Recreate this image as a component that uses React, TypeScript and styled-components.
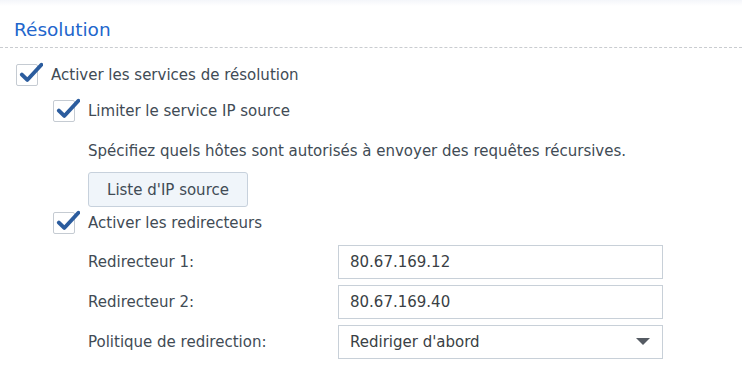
import React from 'react'
import styled, { createGlobalStyle } from 'styled-components'

const GlobalStyle = createGlobalStyle`
    html, body {
        margin: 0;
        padding: 0;
        background: #ffffff;
    }
    body {
        font-family: 'DejaVu Sans', Verdana, sans-serif;
        color: #414b55;
    }
`

type CheckProps = { checked?: boolean }

const CheckBox = ({ checked = true }: CheckProps) => (
    <BoxWrap>
        {checked && (
            <CheckMark viewBox="0 0 24 24">
                <path d="M4.5 12.5 L9.5 17.5 L22.5 3.5" />
            </CheckMark>
        )}
    </BoxWrap>
)

const App = () => {
    return (
        <>
            <GlobalStyle />
            <Page>
                <TopShade />
                <Header>
                    <Title>Résolution</Title>
                </Header>
                <Content>
                    <CheckRow level={0}>
                        <CheckBox />
                        <Label>Activer les services de résolution</Label>
                    </CheckRow>
                    <CheckRow level={1} spacing={8}>
                        <CheckBox />
                        <Label>Limiter le service IP source</Label>
                    </CheckRow>
                    <Description>Spécifiez quels hôtes sont autorisés à envoyer des requêtes récursives.</Description>
                    <Button>Liste d'IP source</Button>
                    <CheckRow level={1} spacing={2}>
                        <CheckBox />
                        <Label>Activer les redirecteurs</Label>
                    </CheckRow>
                    <Form>
                        <FieldRow>
                            <FieldLabel>Redirecteur 1:</FieldLabel>
                            <TextField>80.67.169.12</TextField>
                        </FieldRow>
                        <FieldRow>
                            <FieldLabel>Redirecteur 2:</FieldLabel>
                            <TextField>80.67.169.40</TextField>
                        </FieldRow>
                        <FieldRow>
                            <FieldLabel>Politique de redirection:</FieldLabel>
                            <TextField>
                                Rediriger d'abord
                                <Caret viewBox="0 0 14 8">
                                    <path d="M0 0 H14 L7 7 Z" />
                                </Caret>
                            </TextField>
                        </FieldRow>
                    </Form>
                </Content>
            </Page>
        </>
    )
}

const Page = styled.div`
    width: 742px;
    height: 389px;
    overflow: hidden;
    display: flex;
    flex-direction: column;
`
const TopShade = styled.div`
    height: 6px;
    background: linear-gradient(#f4f6fa, #ffffff);
`
const Header = styled.div`
    padding: 12px 0 5px 14px;
    border-bottom: 1px dashed #c9ccd0;
`
const Title = styled.h2`
    margin: 0;
    font-weight: normal;
    font-size: 18.5px;
    line-height: 24px;
    color: #2266cc;
`
const Content = styled.div`
    display: flex;
    flex-direction: column;
    align-items: flex-start;
    padding-top: 13px;
`
const CheckRow = styled.div<{ level: number; spacing?: number }>`
    display: flex;
    align-items: center;
    gap: 13px;
    height: 28px;
    margin-top: ${(p) => p.spacing ?? 0}px;
    padding-left: ${(p) => (p.level === 0 ? 16 : 53)}px;
`
const BoxWrap = styled.span`
    position: relative;
    box-sizing: border-box;
    width: 22px;
    height: 22px;
    border: 1px solid #c5cbd2;
    border-radius: 2px;
    background: #fff;
`
const CheckMark = styled.svg`
    position: absolute;
    left: 0;
    top: -4px;
    width: 26px;
    height: 26px;
    fill: none;
    stroke: #2b5c9e;
    stroke-width: 3.6;
    stroke-linecap: round;
    stroke-linejoin: round;
`
const Label = styled.span`
    font-size: 15px;
    line-height: 20px;
`
const Description = styled.div`
    margin: 16px 0 0 88px;
    font-size: 15px;
    line-height: 20px;
`
const Button = styled.button`
    margin: 11px 0 0 88px;
    box-sizing: border-box;
    width: 160px;
    height: 35px;
    border: 1px solid #c7d1dc;
    border-radius: 3px;
    background: #f0f5fa;
    color: #414b55;
    font-family: inherit;
    font-size: 15px;
    padding: 0;
`
const Form = styled.div`
    display: flex;
    flex-direction: column;
    gap: 6px;
    margin-top: 8px;
    padding-left: 88px;
`
const FieldRow = styled.div`
    display: flex;
    align-items: center;
`
const FieldLabel = styled.span`
    width: 250px;
    font-size: 15px;
`
const TextField = styled.div`
    box-sizing: border-box;
    width: 325px;
    height: 34px;
    display: flex;
    align-items: center;
    justify-content: space-between;
    padding: 0 11px;
    border: 1px solid #c8d0d8;
    font-size: 15px;
    color: #3a3f45;
`
const Caret = styled.svg`
    width: 14px;
    height: 8px;
    margin-right: 1px;
    fill: #555b63;
`

export default App
